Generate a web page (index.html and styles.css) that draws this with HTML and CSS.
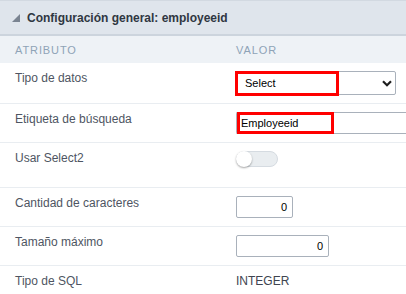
FILE: index.html
```html
<!DOCTYPE html>
<html lang="es">
<head>
<meta charset="utf-8">
<title>Configuración general</title>
<link rel="stylesheet" href="styles.css">
</head>
<body>
<div class="panel">
  <div class="panel-head">
    <svg class="tri" width="8" height="8" viewBox="0 0 8 8"><polygon points="8,0 8,8 0,8" fill="#7a8491"/></svg>
    <span class="title">Configuración general: employeeid</span>
  </div>
  <div class="cols">
    <div>ATRIBUTO</div>
    <div>VALOR</div>
  </div>
  <div class="row">
    <div class="label">Tipo de datos</div>
    <div class="value">
      <div class="ctl">
        <div class="select"><span>Select</span>
          <svg class="chev" width="10" height="7" viewBox="0 0 10 7"><polyline points="1,1.2 5,5.2 9,1.2" fill="none" stroke="#1e1e1e" stroke-width="2.2"/></svg>
        </div>
        <div class="mark mark-sel"></div>
      </div>
    </div>
  </div>
  <div class="row">
    <div class="label">Etiqueta de búsqueda</div>
    <div class="value">
      <div class="ctl">
        <div class="input wide">Employeeid</div>
        <div class="mark mark-inp"></div>
      </div>
    </div>
  </div>
  <div class="row">
    <div class="label">Usar Select2</div>
    <div class="value tall">
      <div class="toggle"><div class="knob"></div></div>
    </div>
  </div>
  <div class="row">
    <div class="label">Cantidad de caracteres</div>
    <div class="value"><div class="input num small">0</div></div>
  </div>
  <div class="row">
    <div class="label">Tamaño máximo</div>
    <div class="value"><div class="input num medium">0</div></div>
  </div>
  <div class="row">
    <div class="label">Tipo de SQL</div>
    <div class="value text">INTEGER</div>
  </div>
</div>
</body>
</html>
```
FILE: styles.css
```css
html, body {
  margin: 0;
  padding: 0;
  background: #ffffff;
  overflow: hidden;
}
body {
  font-family: "Liberation Sans", Arial, sans-serif;
  width: 406px;
}
.panel {
  width: 406px;
}
.panel-head {
  display: flex;
  align-items: center;
  gap: 7px;
  height: 33px;
  padding-left: 12px;
  background: #dfe5ec;
  border-top: 1px solid #d2d9e1;
  border-bottom: 2px solid #ccd4dd;
}
.tri {
  display: block;
}
.title {
  font-size: 12px;
  font-weight: bold;
  color: #2f3742;
}
.cols {
  display: grid;
  grid-template-columns: 221px 1fr;
  align-items: center;
  height: 27px;
  padding-left: 15px;
  background: #eef2f6;
  font-size: 11px;
  letter-spacing: 0.9px;
  color: #8fa3b6;
}
.row {
  display: grid;
  grid-template-columns: 221px 1fr;
  padding: 8px 0 8px 15px;
  border-bottom: 1px solid #e9edf1;
}
.row:last-child {
  border-bottom: none;
}
.label {
  font-size: 12px;
  color: #4e5562;
}
.value.tall {
  height: 28px;
}
.value.text {
  font-size: 12px;
  color: #3e4450;
}
.ctl {
  position: relative;
  display: flex;
}
.select {
  box-sizing: border-box;
  width: 160px;
  height: 24px;
  border: 1px solid #a9b1bb;
  border-radius: 2px;
  padding: 0 3px 0 8px;
  display: flex;
  align-items: center;
  justify-content: space-between;
  font-size: 11px;
  color: #000;
}
.chev {
  display: block;
}
.input {
  box-sizing: border-box;
  height: 22px;
  border: 1px solid #a9b1bb;
  border-radius: 2px;
  display: flex;
  align-items: center;
  font-size: 11px;
  color: #000;
}
.input.wide {
  width: 170px;
  padding-left: 4px;
  border-right: none;
  border-radius: 2px 0 0 2px;
}
.input.num {
  justify-content: flex-end;
  padding-right: 5px;
}
.input.small {
  width: 57px;
}
.input.medium {
  width: 93px;
}
.mark {
  position: absolute;
  top: 0;
  box-sizing: border-box;
  border: 3px solid #ff0000;
}
.mark-sel {
  left: -1px;
  width: 104px;
  height: 25px;
}
.mark-inp {
  left: 1px;
  width: 97px;
  height: 22px;
}
.toggle {
  box-sizing: border-box;
  width: 42px;
  height: 16px;
  border: 1px solid #d5dbe1;
  border-radius: 8px;
  background: #e9edf0;
  display: flex;
  align-items: center;
}
.knob {
  width: 16px;
  height: 16px;
  margin-left: -1px;
  border-radius: 50%;
  background: #ffffff;
  box-shadow: 0 1px 2px rgba(0, 0, 0, 0.35);
}
```
